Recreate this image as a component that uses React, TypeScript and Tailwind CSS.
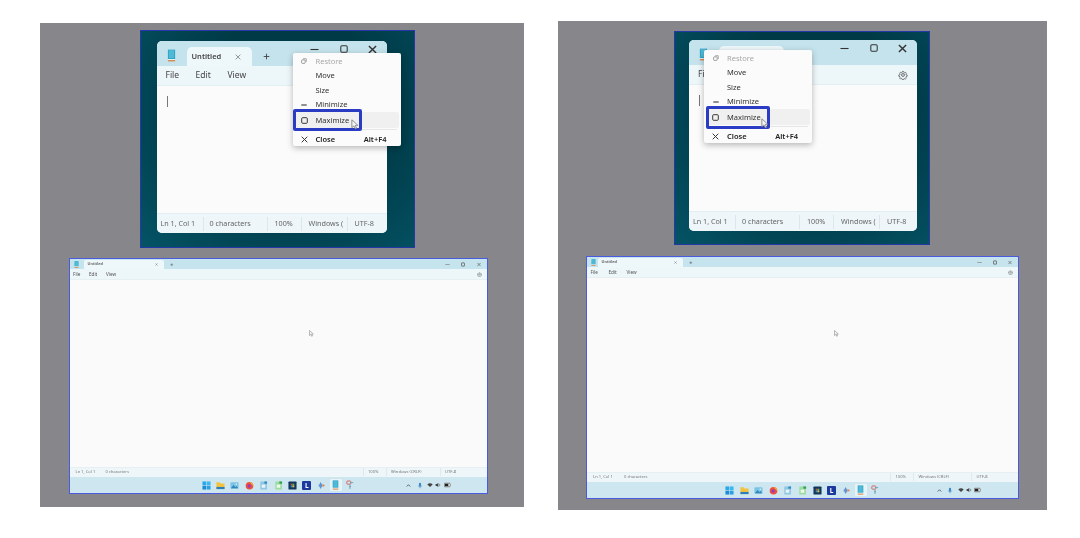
import React from "react";

const font = "font-['Noto_Sans','Open_Sans',sans-serif]";

function NoteIcon({ className = "" }: { className?: string }) {
  return (
    <svg viewBox="0 0 10 14" className={className}>
      <rect x="1" y="0.5" width="8" height="10.5" fill="#2aa3c4" />
      <rect x="2" y="1" width="6" height="9" fill="#4fb9d6" />
      <rect x="1" y="11" width="8" height="1.2" fill="#e9f3f6" />
      <rect x="1" y="12.2" width="8" height="1.3" fill="#d9792f" />
    </svg>
  );
}

function Cursor({ className = "" }: { className?: string }) {
  return (
    <svg viewBox="0 0 10 14" className={className}>
      <path d="M1 1 L1 11 L3.6 8.8 L5.4 12.6 L7 11.8 L5.3 8.2 L8.6 8 Z" fill="#f4f4f4" stroke="#77787c" strokeWidth="1" />
    </svg>
  );
}

function Gear({ className = "" }: { className?: string }) {
  return (
    <svg viewBox="0 0 24 24" fill="none" stroke="#444" strokeWidth="1.8" className={className}>
      <path d="M10.3 2.5h3.4l.6 2.7 2 .9 2.4-1.4 2.3 2.4-1.4 2.4.8 2 2.7.6v3.3l-2.7.7-.8 1.9 1.4 2.4-2.4 2.3-2.3-1.4-2 .8-.6 2.7h-3.4l-.6-2.7-2-.8-2.4 1.4-2.3-2.3 1.4-2.4-.9-1.9-2.7-.7v-3.3l2.7-.6.9-2-1.4-2.4 2.3-2.4 2.4 1.4 2-.9z" transform="translate(1.2 1.2) scale(.9)" />
      <circle cx="12" cy="12" r="3.4" />
    </svg>
  );
}

function X({ className = "", c = "#333", w = 1.6 }: { className?: string; c?: string; w?: number }) {
  return (
    <svg viewBox="0 0 10 10" className={className}>
      <path d="M1 1 L9 9 M9 1 L1 9" stroke={c} strokeWidth={w} fill="none" />
    </svg>
  );
}

function Plus({ className = "" }: { className?: string }) {
  return (
    <svg viewBox="0 0 10 10" className={className}>
      <path d="M5 1 V9 M1 5 H9" stroke="#444" strokeWidth="1.3" fill="none" />
    </svg>
  );
}

function Square({ className = "", c = "#333", w = 1.3 }: { className?: string; c?: string; w?: number }) {
  return (
    <svg viewBox="0 0 10 10" className={className}>
      <rect x="1" y="1" width="8" height="8" rx="1.4" stroke={c} strokeWidth={w} fill="none" />
    </svg>
  );
}

function Minus({ className = "", c = "#333", w = 1.2 }: { className?: string; c?: string; w?: number }) {
  return (
    <svg viewBox="0 0 10 10" className={className}>
      <path d="M0.5 5 H9.5" stroke={c} strokeWidth={w} fill="none" />
    </svg>
  );
}

function SysMenu({ className, boxClass, cursorClass }: { className: string; boxClass: string; cursorClass: string }) {
  const row = "flex items-center h-[14.6px] text-[7.5px] leading-none";
  const ic = "w-[21px] flex justify-center shrink-0 pr-[2px]";
  return (
    <div className={`absolute z-10 w-[108px] h-[93px] bg-[#fbfbfb] rounded-[2px] shadow-[0_2px_6px_rgba(0,0,0,0.28)] px-[2px] pt-[1px] ${className}`}>
      <div className={`${row} text-[#a8a8a8]`}>
        <span className={ic}>
          <svg viewBox="0 0 10 10" className="w-[6px] h-[6px]">
            <rect x="1" y="3" width="6" height="6" rx="1.5" stroke="#8a8a8a" strokeWidth="1.4" fill="none" />
            <path d="M3.5 1.2 H8.8 V6.5" stroke="#8a8a8a" strokeWidth="1.2" fill="none" />
          </svg>
        </span>
        Restore
      </div>
      <div className={`${row} text-[#333]`}><span className={ic} />Move</div>
      <div className={`${row} text-[#333]`}><span className={ic} />Size</div>
      <div className={`${row} text-[#333]`}>
        <span className={ic}><Minus className="w-[6px] h-[6px]" w={1.8} /></span>
        Minimize
      </div>
      <div className={`${row} h-[16px] bg-[#f0f0f0] rounded-[2px] text-[#333]`}>
        <span className={ic}><Square className="w-[7px] h-[7px]" w={1.4} /></span>
        Maximize
      </div>
      <div className="h-[1px] bg-[#e6e6e6] mx-[2px] mt-[1px]" />
      <div className={`${row} mt-[2px] h-[15px] font-semibold text-[#222]`}>
        <span className={ic}><X className="w-[7px] h-[7px]" w={1.4} /></span>
        <span className="flex-1">Close</span>
        <span className="pr-[12px]">Alt+F4</span>
      </div>
      <div className={`absolute border-[3px] border-[#2b3cc4] rounded-[2px] ${boxClass}`} />
      <Cursor className={`absolute w-[8px] h-[11px] ${cursorClass}`} />
    </div>
  );
}

function SmallNote({ right }: { right?: boolean }) {
  const sep = "border-l border-[#dde6ea] h-[14px] flex items-center";
  return (
    <div className={`relative flex flex-col rounded-[5px] bg-[#fbfbfb] ${right ? "ml-[14px] mt-[8px] w-[228px] h-[191px]" : "ml-[15.5px] mt-[10px] w-[230.5px] h-[192px]"}`}>
      <div className="flex items-start bg-[#c5e3ec] rounded-t-[5px] shrink-0 pl-[10px] h-[25px]">
        <NoteIcon className="w-[9px] h-[13px] mt-[8px] shrink-0" />
        <div className="ml-[11px] mt-[6px] w-[65px] h-[19px] bg-[#eef7fa] rounded-t-[5px] flex items-center pl-[5px] text-[7.5px] font-semibold text-[#444]">
          <span className="flex-1">{right ? "" : "Untitled"}</span>
          <X className="w-[6px] h-[6px] mr-[11px]" c="#555" w={1} />
        </div>
        <Plus className="w-[7px] h-[7px] ml-[11px] mt-[12px]" />
        <div className="ml-auto flex">
          {[<Minus key="a" className="w-[9px] h-[9px]" />, <Square key="b" className="w-[8px] h-[8px]" />, <X key="c" className="w-[9px] h-[9px]" />].map((ic, i) => (
            <div key={i} className="w-[29px] h-[16px] flex items-center justify-center">{ic}</div>
          ))}
        </div>
      </div>
      <div className="h-[20px] shrink-0 bg-[#edf6f9] border-b border-[#e3eef2] flex items-center pl-[9px] text-[8.5px] text-[#444]">
        {right ? (
          <span>Fi</span>
        ) : (
          <>
            <span className="w-[30px]">File</span>
            <span className="w-[32px]">Edit</span>
            <span>View</span>
          </>
        )}
        <Gear className="w-[10px] h-[10px] ml-auto mr-[9px]" />
      </div>
      <div className="flex-1 pl-[10px] pt-[10px]">
        <div className="w-[1px] h-[11px] bg-[#777]" />
      </div>
      <div className="h-[20px] shrink-0 bg-[#eef6f9] rounded-b-[5px] border-t border-[#e3eef2] flex items-center text-[7.2px] text-[#666]">
        <div className="w-[46px] pl-[4px]">Ln 1, Col 1</div>
        <div className={`${sep} w-[64px] pl-[6px]`}>0 characters</div>
        <div className={`${sep} w-[34px] pl-[7px]`}>100%</div>
        <div className={`${sep} w-[46px] pl-[7px] overflow-hidden whitespace-nowrap`}>Windows (&nbsp;</div>
        <div className={`${sep} pl-[7px]`}>UTF-8</div>
      </div>
      {right ? (
        <SysMenu className="left-[15px] top-[10px]" boxClass="left-[2px] top-[55.5px] w-[64px] h-[23px]" cursorClass="left-[57px] top-[68px]" />
      ) : (
        <SysMenu className="left-[136px] top-[12px]" boxClass="left-[0.5px] top-[55.5px] w-[69px] h-[22px]" cursorClass="left-[58px] top-[66px]" />
      )}
    </div>
  );
}

const tile = "w-[9px] h-[9px] shrink-0";
const TaskIcons = [
  <svg key="w" viewBox="0 0 10 10" className={tile}>
    <rect x="0.5" y="0.5" width="4.2" height="4.2" fill="#2aa7e8" />
    <rect x="5.3" y="0.5" width="4.2" height="4.2" fill="#3cb6ef" />
    <rect x="0.5" y="5.3" width="4.2" height="4.2" fill="#1a8bd6" />
    <rect x="5.3" y="5.3" width="4.2" height="4.2" fill="#2aa0e2" />
  </svg>,
  <svg key="f" viewBox="0 0 10 10" className={tile}>
    <path d="M0.5 1.5 H4 L5 2.8 H9.5 V9 H0.5 Z" fill="#f3c33f" />
    <rect x="0.5" y="6.6" width="9" height="2.4" fill="#2c7fb8" />
  </svg>,
  <svg key="p" viewBox="0 0 10 10" className={tile}>
    <rect x="0.5" y="1.5" width="9" height="7" rx="1" fill="#7cc4e4" />
    <path d="M1 8 L4 4.5 L6 7 L7.5 5.5 L9 8 Z" fill="#2f86b9" />
    <circle cx="7" cy="3.5" r="0.8" fill="#fff" />
  </svg>,
  <svg key="ff" viewBox="0 0 10 10" className={tile}>
    <circle cx="5" cy="5.3" r="4.2" fill="#ef4e3b" />
    <path d="M5 1 C8 1 9.5 3.5 9.2 6 C8 3.5 6.5 3 5 1 Z" fill="#f9b233" />
    <circle cx="4.6" cy="5.6" r="1.9" fill="#8d3fc4" />
  </svg>,
  <svg key="d1" viewBox="0 0 10 10" className={tile}>
    <path d="M1.5 0.5 H6.8 L8.8 2.5 V9.5 H1.5 Z" fill="#8fc6e2" />
    <rect x="3" y="4" width="4" height="3.5" fill="#e8f4fa" />
    <rect x="6" y="0.5" width="3" height="2.5" fill="#2a8cc4" />
  </svg>,
  <svg key="d2" viewBox="0 0 10 10" className={tile}>
    <path d="M1.5 0.5 H6.8 L8.8 2.5 V9.5 H1.5 Z" fill="#9bdc9f" />
    <rect x="3" y="4" width="4" height="3.5" fill="#ecf9ec" />
    <rect x="6" y="0.5" width="3" height="2.5" fill="#2d9e52" />
  </svg>,
  <svg key="dk" viewBox="0 0 10 10" className={tile}>
    <rect x="0.5" y="0.5" width="9" height="9" rx="1" fill="#12375f" />
    <rect x="3" y="3" width="2" height="2" fill="#d8503a" />
    <rect x="5" y="3" width="2" height="2" fill="#6db33f" />
    <rect x="3" y="5" width="2" height="2" fill="#2a8fd6" />
    <rect x="5" y="5" width="2" height="2" fill="#f3c33f" />
  </svg>,
  <div key="l" className="w-[9px] h-[9px] shrink-0 bg-[#1c3a9e] rounded-[1px] text-white text-[6.5px] leading-[9px] font-bold text-center">L</div>,
  <svg key="cp" viewBox="0 0 10 10" className={tile}>
    <path d="M4 1 L6 5 L4 9 L2 5 Z" fill="#5b93d6" />
    <path d="M6 3 L9 5 L6 7 Z" fill="#e08a5a" />
    <path d="M2 3 L1 5 L2 7 Z" fill="#a7c8e8" />
  </svg>,
  <div key="n" className="w-[12px] h-[12px] bg-[#e8f3f7] rounded-[1px] flex items-center justify-center shrink-0">
    <NoteIcon className="w-[7px] h-[10px]" />
  </div>,
  <svg key="s" viewBox="0 0 10 12" className="w-[8px] h-[10px] shrink-0">
    <rect x="1" y="1" width="5" height="4" rx="1" fill="none" stroke="#d8665a" strokeWidth="1.2" />
    <path d="M5 3 L9 3 M5 5 L5 11" stroke="#6aa6c8" strokeWidth="1.2" />
    <circle cx="5" cy="8" r="0.8" fill="#777" />
  </svg>,
];

function Tray({ className }: { className: string }) {
  return (
    <div className={`flex items-center justify-end ${className}`}>
      <svg viewBox="0 0 10 10" className="w-[5px] h-[5px] mr-[5.5px]"><path d="M1.5 7 L5 3.5 L8.5 7" stroke="#444" strokeWidth="1.6" fill="none" /></svg>
      <svg viewBox="0 0 10 10" className="w-[6px] h-[7px] mr-[4.5px]"><rect x="3.3" y="0.5" width="3.4" height="6" rx="1.7" fill="#3d86c2" /><path d="M2 5 C2 8 8 8 8 5 M5 7.5 V9.5" stroke="#3d86c2" fill="none" /></svg>
      <svg viewBox="0 0 10 10" className="w-[6px] h-[6px] mr-[2px]"><path d="M0.5 4 C3 1.5 7 1.5 9.5 4 L5 8.5 Z" fill="#444" /></svg>
      <svg viewBox="0 0 10 10" className="w-[6px] h-[6px] mr-[2.5px]"><path d="M1 3.5 H3 L5.5 1.5 V8.5 L3 6.5 H1 Z" fill="#444" /><path d="M7 3 C8.2 4 8.2 6 7 7" stroke="#444" fill="none" /></svg>
      <svg viewBox="0 0 12 10" className="w-[7px] h-[6px]"><rect x="0.5" y="2" width="10" height="6" rx="1" fill="#fff" stroke="#333" /><rect x="1.5" y="3" width="6" height="4" fill="#222" /></svg>
    </div>
  );
}

function BigNote({ right }: { right?: boolean }) {
  const sep = "border-l border-[#dfe8ec] h-[8px] flex items-center pl-[4.5px]";
  return (
    <div className={`flex flex-col border border-[#4a5be0] bg-[#fafafa] ${right ? "ml-[28px] mt-[11px] w-[433px] h-[243px]" : "ml-[28.5px] mt-[10px] w-[419px] h-[236px]"}`}>
      <div className="flex items-end bg-[#c6e4ed] shrink-0 h-[10px]">
        <NoteIcon className={`w-[5px] h-[7px] self-center ${right ? "ml-[4px]" : "ml-[4.5px]"}`} />
        <div className={`h-[9.5px] bg-[#eef7fa] rounded-t-[2px] flex items-center pl-[3.5px] text-[3.9px] font-semibold text-[#555] ${right ? "ml-[2px] w-[85px]" : "ml-[5px] w-[80px]"}`}>
          <span className="flex-1">Untitled</span>
          <X className="w-[3px] h-[3px] mr-[6px]" c="#555" w={1.2} />
        </div>
        <Plus className="w-[3.5px] h-[3.5px] ml-[6px] mb-[3px]" />
        <div className="ml-auto flex self-center">
          <div className="w-[15.5px] flex justify-center"><Minus className="w-[5px] h-[5px]" c="#777" /></div>
          <div className="w-[15.5px] flex justify-center"><Square className="w-[4px] h-[5px]" c="#555" w={2} /></div>
          <div className="w-[15.5px] flex justify-center"><X className="w-[4px] h-[5px]" c="#555" /></div>
        </div>
      </div>
      <div className="h-[11px] shrink-0 bg-[#edf6f9] border-b border-[#e6f0f3] flex items-center pl-[3.5px] text-[4.6px] text-[#555]">
        <span className={right ? "w-[18px]" : "w-[16px]"}>File</span>
        <span className={right ? "w-[18px]" : "w-[17px]"}>Edit</span>
        <span>View</span>
        <Gear className="w-[5px] h-[5px] ml-auto mr-[5px]" />
      </div>
      <div className="flex-1 flex items-center justify-center">
        <Cursor className={`w-[5px] h-[7px] ${right ? "ml-[68px] mt-[-82px]" : "ml-[67px] mt-[-80px]"}`} />
      </div>
      <div className="h-[10.5px] shrink-0 bg-[#eef6f9] border-t border-[#e6f0f3] flex items-center text-[4.1px] text-[#777]">
        <div className={right ? "w-[37px] pl-[6px]" : "w-[36px] pl-[6px]"}>Ln 1, Col 1</div>
        <div>0 characters</div>
        <div className={`${sep} ml-auto w-[23px]`}>100%</div>
        <div className={`${sep} ${right ? "w-[58px]" : "w-[54px]"}`}>Windows (CRLF)</div>
        <div className={`${sep} w-[47px]`}>UTF-8</div>
      </div>
      <div className="h-[16px] shrink-0 bg-[#cde6ef] grid grid-cols-[1fr_auto_1fr] items-center">
        <div />
        <div className={`flex items-center justify-center ${right ? "gap-[6.6px]" : "gap-[6.4px]"}`}>
          {TaskIcons.map((ic, i) => (
            <div key={i} className="w-[8px] flex justify-center">{ic}</div>
          ))}
        </div>
        <Tray className={right ? "pr-[37px]" : "pr-[36px]"} />
      </div>
    </div>
  );
}

export default function App() {
  const teal = "bg-[radial-gradient(ellipse_at_55%_35%,#003a47_45%,#05586b_110%)] border border-[#2438a8]";
  return (
    <div className={`w-[1080px] h-[538px] bg-white flex items-start overflow-hidden ${font}`}>
      <div className="ml-[40px] mt-[23px] w-[484px] h-[484px] bg-[#87868b] flex flex-col items-start pt-[7px] blur-[0.5px]">
        <div className={`ml-[100px] w-[275px] h-[218px] ${teal}`}>
          <SmallNote />
        </div>
        <BigNote />
      </div>
      <div className="ml-[34px] mt-[21px] w-[489px] h-[489px] bg-[#87868b] flex flex-col items-start pt-[10px] blur-[0.5px]">
        <div className={`ml-[116px] w-[256px] h-[214px] ${teal}`}>
          <SmallNote right />
        </div>
        <BigNote right />
      </div>
    </div>
  );
}
